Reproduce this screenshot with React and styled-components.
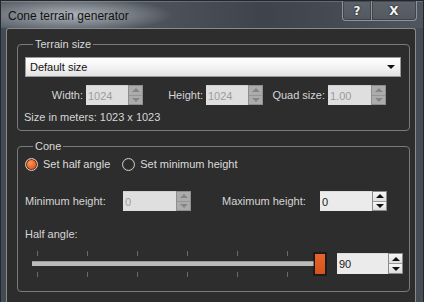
import React from 'react';
import styled, { createGlobalStyle } from 'styled-components';

const Global = createGlobalStyle`
  html, body { margin: 0; padding: 0; background: #2d2d2d; }
  body { font-family: "Liberation Sans", Arial, sans-serif; font-size: 11px; }
  * { box-sizing: border-box; }
`;

const Window = styled.div`
  width: 424px;
  height: 302px;
  overflow: hidden;
  display: flex;
  flex-direction: column;
  border: 1px solid #22272d;
  border-bottom: none;
  background: linear-gradient(90deg, #434b55 0%, #3f464f 55%, #3a4048 75%, #474d55 100%);
`;

const TitleBar = styled.div`
  height: 27px;
  display: flex;
  align-items: flex-start;
  background:
    radial-gradient(ellipse 100px 17px at 72px 14px, rgba(196, 202, 208, 0.8), rgba(196, 202, 208, 0) 100%),
    linear-gradient(90deg, #5c626a 0%, #51575f 30%, #3e444b 62%, #454b53 80%, #50565e 100%);
  box-shadow: inset 0 1px 0 rgba(255, 255, 255, 0.18);
`;

const Title = styled.div`
  margin: 7px 0 0 7px;
  font-family: "Liberation Sans", Arial, sans-serif;
  font-size: 12px;
  line-height: 16px;
  color: #121212;
`;

const CaptionButtons = styled.div`
  margin-left: auto;
  margin-right: 6px;
  display: flex;
`;

const CaptionButton = styled.div`
  width: ${p => p.$w}px;
  height: 20px;
  display: flex;
  align-items: center;
  justify-content: center;
  border: 1px solid #8d939b;
  border-top: none;
  border-left-width: ${p => (p.$first ? 1 : 0)}px;
  border-radius: ${p => (p.$first ? '0 0 0 4px' : '0 0 4px 0')};
  background: linear-gradient(180deg, #5d636b 0%, #52585f 100%);
  box-shadow: inset 0 0 0 1px rgba(0, 0, 0, 0.25);
  color: #f4f4f4;
  font-family: "DejaVu Sans", "Liberation Sans", sans-serif;
  font-weight: bold;
  font-size: ${p => p.$fs}px;
  text-shadow: 0 0 2px #000;
`;

const Client = styled.div`
  flex: 1;
  margin: 0 7px 0 5px;
  border: 1px solid #8a8a8a;
  border-bottom: none;
  border-radius: 3px 3px 0 0;
  background: #2d2d2d;
  padding: 9px 5px 0 10px;
  display: flex;
  flex-direction: column;
  gap: 9px;
`;

const Group = styled.fieldset`
  margin: 0;
  border: 1px solid #7a7a7a;
  border-radius: 4px;
  padding: ${p => p.$pad};
  min-width: 0;
  display: flex;
  flex-direction: column;
`;

const Legend = styled.legend`
  margin-left: 8px;
  padding: 0 2px;
  font-size: 11px;
  line-height: 13px;
  color: #dadada;
`;

const Combo = styled.div`
  height: 20px;
  display: flex;
  align-items: center;
  justify-content: space-between;
  padding: 0 4px 0 4px;
  border: 1px solid #9a9a9a;
  background: linear-gradient(180deg, #ffffff 0%, #f2f2f2 55%, #e2e2e2 100%);
  color: #111;
  font-size: 11px;
`;

const ComboArrow = styled.span`
  width: 0;
  height: 0;
  border-left: 4px solid transparent;
  border-right: 4px solid transparent;
  border-top: 4px solid #111;
  margin-right: 1px;
`;

const SizeRow = styled.div`
  margin-top: 8px;
  display: grid;
  grid-template-columns: 118px 120px 123px;
`;

const Cell = styled.div`
  display: flex;
  align-items: center;
  justify-content: flex-end;
  gap: ${p => p.$gap ?? 3}px;
`;

const Label = styled.span`
  color: #d6d6d6;
  font-size: 11px;
  line-height: 13px;
  white-space: nowrap;
`;

const Info = styled(Label)`
  margin-top: 6px;
  margin-left: -1px;
`;

const SpinBox = styled.div`
  width: ${p => p.$w}px;
  height: ${p => p.$h ?? 20}px;
  display: flex;
  flex-shrink: 0;
`;

const Field = styled.div`
  flex: 1;
  min-width: 0;
  padding-left: 2px;
  background: ${p => (p.$disabled ? '#dfdfdf' : '#ebebeb')};
  color: ${p => (p.$disabled ? '#9c9c9c' : '#1a1a1a')};
  font-size: 11px;
  line-height: ${p => p.$h ?? 20}px;
  border-top: 1px solid ${p => (p.$disabled ? '#d0d0d0' : '#dcdcdc')};
`;

const Spinner = styled.div`
  width: 15px;
  display: flex;
  flex-direction: column;
  border: 1px solid ${p => (p.$disabled ? '#8e8e8e' : '#8a8a8a')};
  background: ${p => (p.$disabled ? '#a9a9a9' : '#e6e6e6')};
`;

const SpinHalf = styled.div`
  flex: 1;
  display: flex;
  align-items: center;
  justify-content: center;
  border-top: ${p => (p.$lower ? `1px solid ${p.$disabled ? '#959595' : '#9a9a9a'}` : 'none')};
  background: ${p => (p.$disabled ? '#acacac' : 'linear-gradient(180deg, #f6f6f6, #dedede)')};
`;

const Tri = styled.span`
  width: 0;
  height: 0;
  border-left: 4px solid transparent;
  border-right: 4px solid transparent;
  ${p =>
    p.$down
      ? `border-top: 4px solid ${p.$disabled ? '#858585' : '#111'};`
      : `border-bottom: 4px solid ${p.$disabled ? '#858585' : '#111'};`}
`;

const RadioRow = styled.div`
  display: flex;
  align-items: center;
  height: 14px;
`;

const RadioOption = styled.label`
  display: flex;
  align-items: center;
  gap: 5px;
  margin-right: ${p => p.$mr ?? 0}px;
  color: #dcdcdc;
  font-size: 11px;
`;

const RadioDot = styled.span`
  width: 13px;
  height: 13px;
  border-radius: 50%;
  border: 1px solid #cfcfcf;
  background: ${p =>
    p.$checked
      ? 'radial-gradient(circle at 40% 35%, #ff9860 0%, #ec6a2c 45%, #c84a14 100%)'
      : '#2b2b2b'};
  box-shadow: ${p => (p.$checked ? 'inset 0 0 0 1px #6b3418' : 'inset 0 0 0 1px #3a3a3a')};
`;

const HeightRow = styled.div`
  margin-top: 20px;
  display: grid;
  grid-template-columns: 166px 165px;
  column-gap: 31px;
`;

const Pair = styled.div`
  display: flex;
  align-items: center;
  justify-content: space-between;
`;

const AngleLabel = styled(Label)`
  margin-top: 17px;
`;

const SliderRow = styled.div`
  margin-top: 9px;
  display: flex;
  align-items: center;
  gap: 11px;
`;

const Slider = styled.div`
  width: 301px;
  height: 27px;
  display: flex;
  flex-direction: column;
  justify-content: space-between;
  position: relative;
`;

const Ticks = styled.div`
  display: flex;
  gap: 49px;
  padding-left: 12px;
  height: 6px;
`;

const Tick = styled.span`
  width: 1px;
  height: 5px;
  margin-top: 1px;
  background: #6a6a6a;
`;

const Track = styled.div`
  margin: 0 8px 0 7px;
  height: 4px;
  background: #bcbcbc;
  box-shadow: 0 -1px 0 #9c9c9c;
  position: relative;
`;

const Thumb = styled.div`
  position: absolute;
  right: -8px;
  top: -9px;
  width: 12px;
  height: 22px;
  background: linear-gradient(180deg, #e8642a, #d8521a);
  border: 1px solid #1a1a1a;
  box-shadow: 0 0 0 1px rgba(0, 0, 0, 0.35);
`;

function Spin({ value, w, h, disabled }) {
  return (
    <SpinBox $w={w} $h={h}>
      <Field $disabled={disabled} $h={h}>{value}</Field>
      <Spinner $disabled={disabled}>
        <SpinHalf $disabled={disabled}>
          <Tri $disabled={disabled} />
        </SpinHalf>
        <SpinHalf $lower $disabled={disabled}>
          <Tri $down $disabled={disabled} />
        </SpinHalf>
      </Spinner>
    </SpinBox>
  );
}

export default function App() {
  return (
    <>
      <Global />
      <Window>
        <TitleBar>
          <Title>Cone terrain generator</Title>
          <CaptionButtons>
            <CaptionButton $w={30} $first $fs={12}>?</CaptionButton>
            <CaptionButton $w={45} $fs={12}>X</CaptionButton>
          </CaptionButtons>
        </TitleBar>
        <Client>
          <Group $pad="6px 8px 6px 7px">
            <Legend>Terrain size</Legend>
            <Combo>
              <span>Default size</span>
              <ComboArrow />
            </Combo>
            <SizeRow>
              <Cell>
                <Label>Width:</Label>
                <Spin value="1024" w={57} disabled />
              </Cell>
              <Cell>
                <Label>Height:</Label>
                <Spin value="1024" w={57} disabled />
              </Cell>
              <Cell>
                <Label>Quad size:</Label>
                <Spin value="1.00" w={58} disabled />
              </Cell>
            </SizeRow>
            <Info>Size in meters: 1023 x 1023</Info>
          </Group>
          <Group $pad="4px 5px 14px 7px">
            <Legend>Cone</Legend>
            <RadioRow>
              <RadioOption $mr={12}>
                <RadioDot $checked />
                Set half angle
              </RadioOption>
              <RadioOption>
                <RadioDot />
                Set minimum height
              </RadioOption>
            </RadioRow>
            <HeightRow>
              <Pair>
                <Label>Minimum height:</Label>
                <Spin value="0" w={68} disabled />
              </Pair>
              <Pair>
                <Label>Maximum height:</Label>
                <Spin value="0" w={67} />
              </Pair>
            </HeightRow>
            <AngleLabel>Half angle:</AngleLabel>
            <SliderRow>
              <Slider>
                <Ticks>
                  {[0, 1, 2, 3, 4, 5].map(i => <Tick key={i} />)}
                </Ticks>
                <Track>
                  <Thumb />
                </Track>
                <Ticks>
                  {[0, 1, 2, 3, 4, 5].map(i => <Tick key={i} />)}
                </Ticks>
              </Slider>
              <Spin value="90" w={66} h={21} />
            </SliderRow>
          </Group>
        </Client>
      </Window>
    </>
  );
}
